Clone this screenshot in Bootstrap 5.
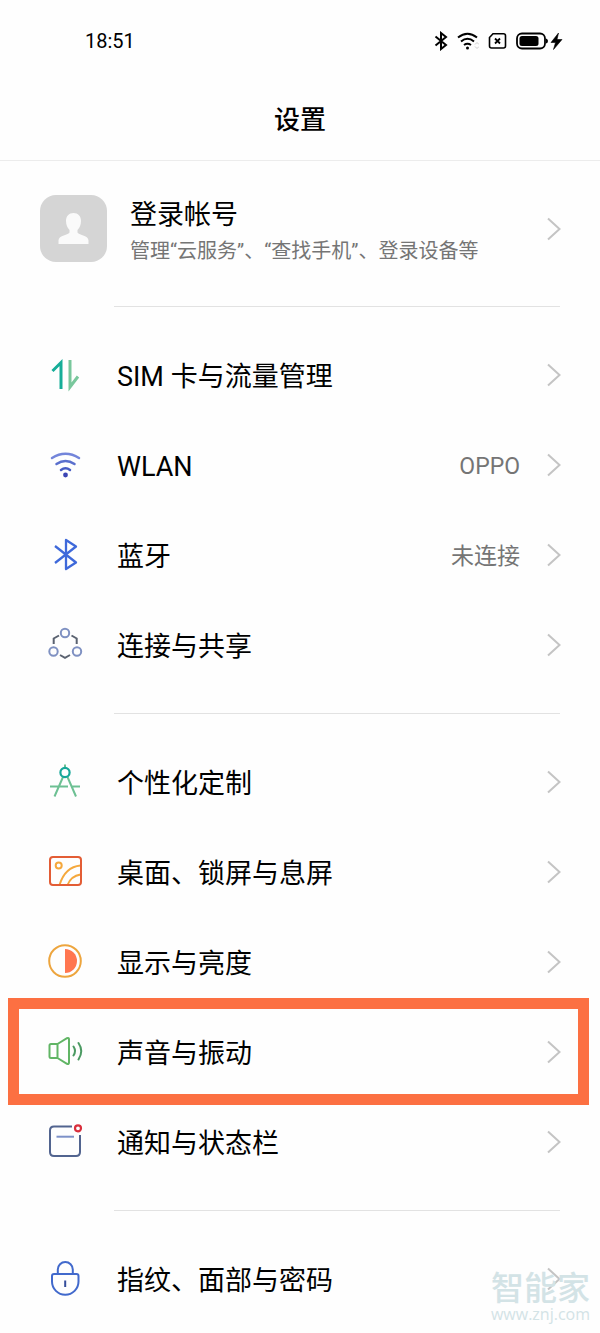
<!DOCTYPE html>
<html lang="zh-CN">
<head>
<meta charset="utf-8">
<meta name="viewport" content="width=device-width, initial-scale=1">
<title>设置</title>
<link href="https://cdn.jsdelivr.net/npm/bootstrap@5.3.0/dist/css/bootstrap.min.css" rel="stylesheet">
<style>
  body { font-family: Roboto, "Noto Sans CJK SC", sans-serif; color: #000; background: #fefefe; }
  svg { fill: none; stroke-width: 2; flex: none; display: block; }
  a { color: inherit; text-decoration: none; }
  .status-bar { height: 82px; padding: 0 37px 0 85px; font-size: 20px; }
  .status-icons { gap: 9px; }
  .page-title { height: 78px; font-size: 26px; line-height: 76px; font-weight: 500; border-bottom: 1px solid #ececec; box-sizing: content-box; }
  .account { padding: 13px 39px 0 40px; height: 122px; gap: 23px; }
  .avatar { width: 67px; height: 67px; border-radius: 16px; background: #d5d5d5; }
  .account-text { padding-top: 8px; }
  .account-name { font-size: 27px; line-height: 36px; }
  .account-note { font-size: 20px; line-height: 36px; color: #757575; }
  .divider { height: 1px; margin: 23px 40px 23px 114px; background: #e2e2e2; }
  .setting { height: 90px; padding: 0 39px 0 45px; font-size: 27px; position: relative; }
  .setting-icon { margin-right: 32px; }
  .setting-label, .setting-value { padding-top: 4px; }
  .setting-value { font-size: 23px; color: #757575; margin-right: 27px; }
  .chevron { stroke: #c4c4c4; }
  .arrows path { stroke-width: 3px; }
  .highlighted::after { content: ""; position: absolute; inset: -9px 11px -8px 8px; border: 11px solid #fc7042; z-index: 1; pointer-events: none; }
  .watermark { position: absolute; right: 10px; bottom: 2px; color: #d3e3e6; pointer-events: none; text-align: right; }
  .watermark-name { font-size: 33px; line-height: 34px; font-weight: 500; }
  .watermark-url { font-family: "Open Sans", sans-serif; font-size: 16px; line-height: 16px; }
</style>
</head>
<body>
<svg class="d-none"><symbol id="chev" viewBox="0 0 14 24"><path d="M1 1.500L12.500 12L1 22.500"/></symbol></svg>
<div class="position-relative overflow-hidden">
<header>
  <div class="status-bar d-flex align-items-center justify-content-between">
    <time>18:51</time>
    <div class="status-icons d-flex align-items-center" aria-hidden="true">
      <svg width="14" height="20" stroke="#000"><path d="M1.500 5.500L12 14L7 18V2L12 6L1.500 14.500"/></svg>
      <svg width="22" height="20" stroke="#000"><path d="M1 6.500Q10.500-1 20 6.500M4 10.500Q10.500 5 17 10.500M7 14Q10.500 11.500 14 14"/><circle cx="10.500" cy="17" r="1.500" fill="#000" stroke="none"/><path d="M18 13.500L20 11.500L22 13.500M18 15.500L20 17.500L22 15.500" stroke="#ccc" stroke-width="1"/></svg>
      <svg width="19" height="20" stroke="#000"><path d="M5 2.800H15.500Q17.500 2.800 17.500 4.800V15Q17.500 17 15.500 17H3.500Q1.500 17 1.500 15V6.500Z" stroke-width="1.600"/><path d="M7 7.500L12 12.500M12 7.500L7 12.500" stroke-width="1.800"/></svg>
      <svg width="47" height="20"><rect x="1" y="2.500" width="28" height="15" rx="5" stroke="#000" stroke-width="1.800"/><rect x="3.500" y="5" width="19" height="10" rx="2.500" fill="#000"/><path d="M30 7.500Q32 8 32 10T30 12.500Z" fill="#000"/><path d="M42.500 2L35 11.500H39.500L37.500 18.500L46 8.500H41Z" fill="#000" stroke="#000" stroke-width=".6"/></svg>
    </div>
  </div>
  <h1 class="page-title text-center m-0">设置</h1>
</header>
<main>
  <a href="#" class="account d-flex align-items-center">
    <span class="avatar d-flex align-items-center justify-content-center"><svg width="31" height="32"><path d="M15.500 0C20 0 23 3 23 8C23 12 21.500 15 19.500 17V19.500C20 22 30.500 22 30.500 27.500V31H.5V27.500C.5 22 11 22 11.500 19.500V17C9.500 15 8 12 8 8C8 3 11 0 15.500 0Z" fill="#fafafa"/></svg></span>
    <span class="account-text flex-grow-1"><span class="account-name d-block">登录帐号</span><span class="account-note d-block">管理“云服务”、“查找手机”、登录设备等</span></span>
    <svg class="chevron" width="14" height="24"><use href="#chev"/></svg>
  </a>
  <div class="divider"></div>
  <nav>
    <a href="#" class="setting d-flex align-items-center">
      <svg class="setting-icon arrows" width="40" height="40"><path d="M7.500 16L16 7.500V34" stroke="#16ad98"/><path d="M25 5V32L33 21.500" stroke="#79c79c"/></svg>
      <span class="setting-label flex-grow-1">SIM 卡与流量管理</span><svg class="chevron" width="14" height="24"><use href="#chev"/></svg></a>
    <a href="#" class="setting d-flex align-items-center">
      <svg class="setting-icon" width="40" height="40" stroke-linecap="round"><g stroke-width="2.500"><path d="M7 13Q20.500 4.500 34 13" stroke="#7385da"/><path d="M11.500 19Q20.500 13 29.500 19" stroke="#5a6fcd"/><path d="M16 25Q20.500 21.500 25 25" stroke="#465bc3"/></g><circle cx="20.500" cy="30" r="2.400" fill="#3b44b4"/></svg>
      <span class="setting-label flex-grow-1">WLAN</span><span class="setting-value">OPPO</span><svg class="chevron" width="14" height="24"><use href="#chev"/></svg></a>
    <a href="#" class="setting d-flex align-items-center">
      <svg class="setting-icon" width="40" height="40" stroke="#3e69da" stroke-linejoin="round"><path d="M10 11L31 27.500L21 34V5L31 11.500L10 28" stroke-width="2.300"/></svg>
      <span class="setting-label flex-grow-1">蓝牙</span><span class="setting-value">未连接</span><svg class="chevron" width="14" height="24"><use href="#chev"/></svg></a>
    <a href="#" class="setting d-flex align-items-center">
      <svg class="setting-icon" width="40" height="40"><g stroke="#7f91c2"><circle cx="20" cy="8" r="4.200"/><circle cx="8.500" cy="26.500" r="4.200"/><circle cx="32" cy="26.500" r="4.200"/></g><path d="M14 10.500L8.700 13.500V19M26.500 10.500L31.700 13.500V19M15 30L20 32.800L25 30" stroke="#5a6270"/></svg>
      <span class="setting-label flex-grow-1">连接与共享</span><svg class="chevron" width="14" height="24"><use href="#chev"/></svg></a>
    <div class="divider"></div>
    <a href="#" class="setting d-flex align-items-center">
      <svg class="setting-icon" width="40" height="40"><path d="M20 2.500V6M18 15L9.500 34.500M22.500 15L31 34.500M5 24.500H23M27 24.500H35" stroke="#6dc093"/><circle cx="20" cy="10.500" r="4.600" stroke="#16a799" stroke-width="2.200"/></svg>
      <span class="setting-label flex-grow-1">个性化定制</span><svg class="chevron" width="14" height="24"><use href="#chev"/></svg></a>
    <a href="#" class="setting d-flex align-items-center">
      <svg class="setting-icon" width="40" height="40"><g stroke="#f5a83c"><circle cx="13.700" cy="13.500" r="3"/><path d="M14.500 33Q20 15 35.500 13.500M22.500 33Q26 24 35.500 22.500"/></g><rect x="5" y="5" width="31" height="28" rx="3" stroke="#e35d35"/></svg>
      <span class="setting-label flex-grow-1">桌面、锁屏与息屏</span><svg class="chevron" width="14" height="24"><use href="#chev"/></svg></a>
    <a href="#" class="setting d-flex align-items-center">
      <svg class="setting-icon" width="40" height="40"><circle cx="20" cy="19" r="15.800" stroke="#eda53e"/><path d="M20 7A12 12 0 0 1 20 31Z" fill="#ff7650"/></svg>
      <span class="setting-label flex-grow-1">显示与亮度</span><svg class="chevron" width="14" height="24"><use href="#chev"/></svg></a>
    <a href="#" class="setting highlighted d-flex align-items-center">
      <svg class="setting-icon" width="40" height="40" stroke-linejoin="round" stroke-linecap="round"><path d="M12.500 12H6Q4.500 12 4.500 13.500V24.500Q4.500 26 6 26H12.500ZM12.500 12L22 6.200Q24 5.500 24 7.500V30.500Q24 32.500 22 31.800L12.500 26" stroke="#61b565"/><path d="M28.500 14.500Q31.500 19 28.500 23.500M33.500 11Q39 19 33.500 27.500" stroke="#4b9a62"/></svg>
      <span class="setting-label flex-grow-1">声音与振动</span><svg class="chevron" width="14" height="24"><use href="#chev"/></svg></a>
    <a href="#" class="setting d-flex align-items-center">
      <svg class="setting-icon" width="40" height="40"><path d="M27 4.500H9Q5 4.500 5 8.500V30Q5 34 9 34H31Q35 34 35 30V13" stroke="#52648f"/><path d="M11.500 14.700H29" stroke="#7d91c8"/><circle cx="33" cy="6.300" r="3" stroke="#d92f3c" stroke-width="2.200"/></svg>
      <span class="setting-label flex-grow-1">通知与状态栏</span><svg class="chevron" width="14" height="24"><use href="#chev"/></svg></a>
    <div class="divider"></div>
    <a href="#" class="setting d-flex align-items-center">
      <svg class="setting-icon" width="40" height="40" stroke="#4169cc"><path d="M12.800 15V10.500A7.500 7.500 0 0 1 27.800 10.500V15"/><path d="M9 15H31.500Q33.500 15 33.500 17V22.500A13 13 0 0 1 7 22.500V17Q7 15 9 15Z"/><path d="M20.200 21.500V28" stroke="#344d9b"/></svg>
      <span class="setting-label flex-grow-1">指纹、面部与密码</span><svg class="chevron" width="14" height="24"><use href="#chev"/></svg></a>
  </nav>
</main>
<div class="watermark"><div class="watermark-name">智能家</div><div class="watermark-url">www.znj.com</div></div>
</div>
<script src="https://cdn.jsdelivr.net/npm/bootstrap@5.3.0/dist/js/bootstrap.bundle.min.js"></script>
</body>
</html>
